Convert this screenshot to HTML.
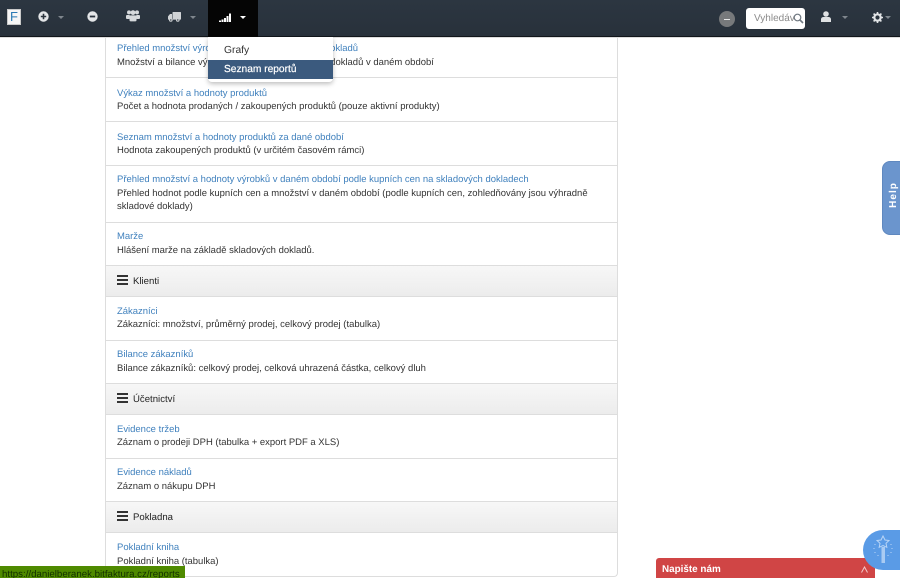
<!DOCTYPE html>
<html lang="cs"><head><meta charset="utf-8"><title>Reporty</title>
<style>
html,body{margin:0;padding:0}
body{width:900px;height:578px;overflow:hidden;position:relative;background:#fff;font-family:"Liberation Sans",Arial,sans-serif;font-size:10px;color:#333;text-rendering:geometricPrecision}
.abs{position:absolute}
.t{position:absolute;left:117px;white-space:nowrap;line-height:14px;font-size:9.47px}
.a{color:#3f80bd}
.d{color:#333}
.line{position:absolute;left:106px;width:511px;height:1px;background:#ddd}
.head{position:absolute;left:106px;width:511px;height:30px;background:linear-gradient(#f7f7f7,#ececec);border-top:1px solid #ddd;border-bottom:1px solid #ddd;color:#222}
.head span{position:absolute;left:27px;top:8.5px;line-height:14px;font-size:9.6px}
.head i{position:absolute;left:11px;width:11px;height:2px;background:#333}
nav{position:absolute;left:0;top:0;width:900px;height:36px;background:linear-gradient(#2c3641,#28313b);border-bottom:1px solid #11161b;box-shadow:0 1px 0 #ddd}
svg{position:absolute;display:block}
.car{position:absolute;width:0;height:0;border-left:3px solid transparent;border-right:3px solid transparent;border-top:3px solid #7f868d;top:16px}
</style></head>
<body>
<div class="abs" style="left:105px;top:37px;width:513px;height:540px;border:1px solid #ddd;border-top:0;border-radius:0 0 4px 4px;box-sizing:border-box"></div>

<div class="t a" style="top:42px">Přehled množství výrobků v daném období podle dokladů</div>
<div class="t d" style="top:56px">Množství a bilance výrobků v daném období podle dokladů v daném období</div>
<div class="line" style="top:77px"></div>
<div class="t a" style="top:87px">Výkaz množství a hodnoty produktů</div>
<div class="t d" style="top:100px">Počet a hodnota prodaných / zakoupených produktů (pouze aktivní produkty)</div>
<div class="line" style="top:121px"></div>
<div class="t a" style="top:131px">Seznam množství a hodnoty produktů za dané období</div>
<div class="t d" style="top:144px">Hodnota zakoupených produktů (v určitém časovém rámci)</div>
<div class="line" style="top:165px"></div>
<div class="t a" style="top:173px">Přehled množství a hodnoty výrobků v daném období podle kupních cen na skladových dokladech</div>
<div class="t d" style="top:187px">Přehled hodnot podle kupních cen a množství v daném období (podle kupních cen, zohledňovány jsou výhradně</div>
<div class="t d" style="top:200px">skladové doklady)</div>
<div class="line" style="top:222px"></div>
<div class="t a" style="top:230px">Marže</div>
<div class="t d" style="top:244px">Hlášení marže na základě skladových dokladů.</div>

<div class="head" style="top:265px"><i style="top:9px"></i><i style="top:13px"></i><i style="top:17px"></i><span>Klienti</span></div>
<div class="t a" style="top:305px">Zákazníci</div>
<div class="t d" style="top:318px">Zákazníci: množství, průměrný prodej, celkový prodej (tabulka)</div>
<div class="line" style="top:340px"></div>
<div class="t a" style="top:348px">Bilance zákazníků</div>
<div class="t d" style="top:362px">Bilance zákazníků: celkový prodej, celková uhrazená částka, celkový dluh</div>

<div class="head" style="top:383px"><i style="top:9px"></i><i style="top:13px"></i><i style="top:17px"></i><span>Účetnictví</span></div>
<div class="t a" style="top:423px">Evidence tržeb</div>
<div class="t d" style="top:436px">Záznam o prodeji DPH (tabulka + export PDF a XLS)</div>
<div class="line" style="top:458px"></div>
<div class="t a" style="top:466px">Evidence nákladů</div>
<div class="t d" style="top:480px">Záznam o nákupu DPH</div>

<div class="head" style="top:501px"><i style="top:9px"></i><i style="top:13px"></i><i style="top:17px"></i><span>Pokladna</span></div>
<div class="t a" style="top:541px">Pokladní kniha</div>
<div class="t d" style="top:555px">Pokladní kniha (tabulka)</div>

<nav>
  <div class="abs" style="left:7px;top:9px;width:14px;height:16px;background:#f6f6f6;box-shadow:inset 0 0 0 1px #c9c9c9;color:#2a7ab5;font-size:13px;line-height:16px;text-align:center">F</div>

  <svg style="left:38px;top:11px" width="11" height="11" viewBox="0 0 11 11"><circle cx="5.5" cy="5.5" r="5.2" fill="#e4e6e8"/><path d="M5.5 2.8v5.4M2.8 5.5h5.4" stroke="#2a333d" stroke-width="1.6"/></svg>
  <div class="car" style="left:58px"></div>

  <svg style="left:87px;top:11px" width="11" height="11" viewBox="0 0 11 11"><circle cx="5.5" cy="5.5" r="5.2" fill="#e4e6e8"/><path d="M2.8 5.5h5.4" stroke="#2a333d" stroke-width="1.8"/></svg>

  <svg style="left:126px;top:10px" width="14" height="12" viewBox="0 0 14 12"><g fill="#d6d9dc"><circle cx="3" cy="2.4" r="2"/><circle cx="11" cy="2.4" r="2"/><circle cx="7" cy="2.6" r="2.4"/><rect x="0" y="5" width="4" height="4" rx="1"/><rect x="10" y="5" width="4" height="4" rx="1"/><rect x="3.5" y="5.4" width="7" height="6" rx="1.2"/></g></svg>

  <svg style="left:168px;top:12px" width="13" height="10" viewBox="0 0 13 10"><g fill="#d0d3d6"><rect x="4.5" y="0" width="8.5" height="7.6" rx=".6"/><path d="M0 4.4 2 2h2v5.6H0z"/><circle cx="2.8" cy="8" r="1.8"/><circle cx="9.8" cy="8" r="1.8"/></g><circle cx="2.8" cy="8" r=".7" fill="#2a333d"/><circle cx="9.8" cy="8" r=".7" fill="#2a333d"/></svg>
  <div class="car" style="left:190px"></div>

  <div class="abs" style="left:208px;top:0;width:50px;height:37px;background:#050505"></div>
  <svg style="left:219px;top:13px" width="12" height="9" viewBox="0 0 12 9"><path d="M0 7.500h2V9H0zM2.500 6.500h2V9h-2zM5 5h2v4H5zM7.500 3h2v6h-2zM10 .5h2V9h-2z" fill="#fff"/></svg>
  <div class="car" style="left:240px;border-top-color:#fff;border-left-width:3.5px;border-right-width:3.5px"></div>

  <div class="abs" style="left:719px;top:11px;width:16px;height:16px;border-radius:50%;background:#77797b"></div>
  <div class="abs" style="left:724px;top:18.5px;width:6px;height:1px;background:#e8e8e8"></div>

  <div class="abs" style="left:746px;top:8px;width:59px;height:21px;background:#fff;border-radius:3px;overflow:hidden;color:#8a8a8a;font-size:10px;line-height:21px;padding-left:8px;box-sizing:border-box;white-space:nowrap">Vyhledáv</div>
  <svg style="left:793px;top:13px" width="11" height="11" viewBox="0 0 11 11"><circle cx="4.5" cy="4.5" r="3.3" fill="none" stroke="#6e7780" stroke-width="1.2"/><path d="M7 7l3 3" stroke="#6e7780" stroke-width="1.6"/></svg>

  <svg style="left:821px;top:11px" width="10" height="11" viewBox="0 0 10 11"><g fill="#dfe1e3"><circle cx="5" cy="3" r="2.8"/><path d="M0 11V8.400C0 6.800 1.200 6 2.600 6h4.800C8.800 6 10 6.800 10 8.400V11z"/></g></svg>
  <div class="car" style="left:842px"></div>

  <svg style="left:872px;top:12px" width="11" height="11" viewBox="0 0 11 11"><circle cx="5.500" cy="5.500" r="3.200" fill="none" stroke="#e2e4e6" stroke-width="2.200"/><path d="M5.500 0v2M5.500 9v2M0 5.500h2M9 5.500h2M1.600 1.600l1.400 1.400M8 8l1.400 1.400M1.600 9.400L3 8M8 3l1.400-1.400" stroke="#e2e4e6" stroke-width="1.600"/></svg>
  <div class="car" style="left:885px"></div>
</nav>

<div class="abs" style="left:208px;top:37px;width:125px;height:45px;background:#fff;border-radius:0 0 4px 4px;box-shadow:0 2px 5px rgba(0,0,0,.25)"></div>
<div class="abs" style="left:224px;top:43.500px;font-size:10.300px;line-height:14px;color:#333">Grafy</div>
<div class="abs" style="left:208px;top:60px;width:125px;height:19px;background:#3b5a7e"></div>
<div class="abs" style="left:224px;top:62.500px;font-size:10.200px;line-height:14px;color:#fff;-webkit-text-stroke:.2px #fff">Seznam reportů</div>

<div class="abs" style="left:882px;top:161px;width:30px;height:74px;background:#6b95cd;border-radius:8px;border:1px solid #5f88bf;box-sizing:border-box"></div>
<div class="abs" style="left:879px;top:188px;width:30px;height:14px;transform:rotate(-90deg);color:#fff;font-size:10px;font-weight:bold;letter-spacing:1px;line-height:14px;text-align:center">Help</div>

<div class="abs" style="left:656px;top:558px;width:219px;height:20px;background:#d04545;border-radius:3px 3px 0 0"></div>
<div class="abs" style="left:662px;top:563px;color:#fff;font-size:9.900px;font-weight:bold;line-height:14px">Napište nám</div>
<svg style="left:860px;top:566px" width="9" height="7" viewBox="0 0 9 7"><path d="M1.500 6.500 4.500 1l3 5.500" fill="none" stroke="#f2c9c9" stroke-width="1"/></svg>

<div class="abs" style="left:863px;top:530px;width:60px;height:40px;background:#5a9be6;border-radius:20px"></div>
<svg style="left:872px;top:535px" width="22" height="30" viewBox="0 0 22 30"><path d="M11 1l2 4 4 .5-3 2.800.8 4L11 10.500 7.200 12.300 8 8.300 5 5.500 9 5z" fill="none" stroke="#b9d5f6" stroke-width="1"/><rect x="9.500" y="12" width="3.500" height="16" fill="#a9cbf3"/><path d="M3 9v1M2 13v1M3 17v1M6 20v1M19 9v1M20 13v1M19 17v1M16 20v1" stroke="#b9d5f6" stroke-width="1"/></svg>

<div class="abs" style="left:0;top:566px;width:185px;height:12px;background:#4f8a00;color:#123000;font-size:9.700px;line-height:17px;padding-left:2px;box-sizing:border-box;white-space:nowrap;overflow:hidden">https://danielberanek.bitfaktura.cz/reports</div>
</body></html>
